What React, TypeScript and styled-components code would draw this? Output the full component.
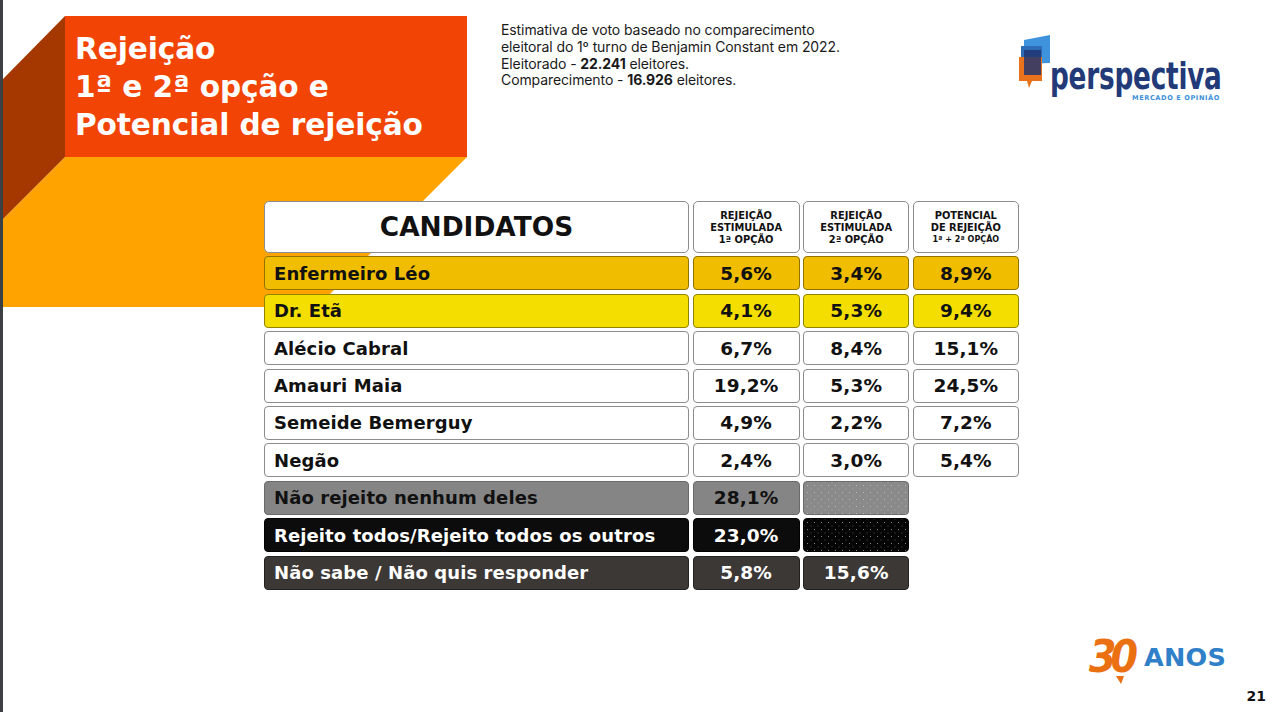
import styled, { createGlobalStyle, css } from 'styled-components';

const GlobalStyle = createGlobalStyle`
  html, body {
    margin: 0;
    padding: 0;
    background: #ffffff;
  }
  body {
    font-family: 'DejaVu Sans', 'Liberation Sans', sans-serif;
  }
`;

const Page = styled.div`
  position: relative;
  width: 1277px;
  height: 712px;
  box-sizing: border-box;
  border-left: 3px solid #3c3f43;
  overflow: hidden;
  background: #fff;
  display: flex;
  flex-direction: column;
`;

const Decor = styled.svg`
  position: absolute;
  left: 0;
  top: 0;
  z-index: 0;
`;

const TopRow = styled.div`
  position: relative;
  z-index: 1;
  height: 201px;
  display: flex;
  align-items: flex-start;
`;

const TitleBox = styled.h1`
  margin: 16px 0 0 62px;
  width: 402px;
  height: 141px;
  box-sizing: border-box;
  padding: 14px 0 0 10px;
  background: #f24505;
  color: #fff;
  font-family: 'DejaVu Sans', sans-serif;
  font-weight: 700;
  font-size: 29.6px;
  line-height: 38px;
  letter-spacing: -0.1px;
`;

const Info = styled.p`
  margin: 22px 0 0 34px;
  font-family: Inter, 'Open Sans', sans-serif;
  font-size: 14px;
  line-height: 16.8px;
  color: #1a1a1a;
  letter-spacing: -0.1px;
  b {
    font-weight: 700;
  }
`;

const Logo = styled.div`
  margin: 34px 51px 0 auto;
  width: 210px;
  display: flex;
  align-items: flex-start;
`;

const Wordmark = styled.div`
  margin-top: 27px;
  margin-left: -2px;
  width: 176px;
  display: flex;
  flex-direction: column;
`;

const Brand = styled.span`
  display: inline-block;
  white-space: nowrap;
  font-family: 'DejaVu Sans Condensed', 'DejaVu Sans', sans-serif;
  font-weight: 700;
  font-size: 38px;
  line-height: 30px;
  color: #233a78;
  transform: scaleX(0.77);
  transform-origin: left center;
  letter-spacing: -0.3px;
`;

const Tagline = styled.span`
  align-self: flex-end;
  margin: 4px 6px 0 0;
  font-family: 'DejaVu Sans', sans-serif;
  font-weight: 700;
  font-size: 6.6px;
  line-height: 7px;
  letter-spacing: 0.6px;
  color: #3b8fd8;
  white-space: nowrap;
`;

const Table = styled.div`
  position: relative;
  z-index: 1;
  margin-left: 261px;
  display: grid;
  grid-template-columns: 425px 107px 106px 106px;
  grid-template-rows: 52px repeat(9, 34px);
  column-gap: 3.6px;
  row-gap: 3.4px;
  font-family: 'DejaVu Sans', sans-serif;
  font-weight: 700;
`;

type Tone = 'white' | 'gold' | 'yellow' | 'gray' | 'black' | 'dark';

const tones: Record<Tone, { bg: string; border: string; fg: string }> = {
  white: { bg: '#ffffff', border: '#8c8c8c', fg: '#111111' },
  gold: { bg: '#f0bd00', border: '#8f7200', fg: '#111111' },
  yellow: { bg: '#f4de00', border: '#8f8300', fg: '#111111' },
  gray: { bg: '#858585', border: '#6a6a6a', fg: '#111111' },
  black: { bg: '#0c0c0c', border: '#000000', fg: '#ffffff' },
  dark: { bg: '#3c3836', border: '#242220', fg: '#ffffff' },
};

const dots = {
  gray: css`
    background-color: #8a8a8a;
    background-image: radial-gradient(rgba(255, 255, 255, 0.4) 0.6px, transparent 1px),
      radial-gradient(rgba(255, 255, 255, 0.25) 0.6px, transparent 1px);
    background-size: 7px 7px;
    background-position: 0 0, 3.5px 3.5px;
  `,
  black: css`
    background-color: #050505;
    background-image: radial-gradient(rgba(255, 255, 255, 0.5) 0.6px, transparent 1px),
      radial-gradient(rgba(255, 255, 255, 0.3) 0.6px, transparent 1px);
    background-size: 7px 7px;
    background-position: 0 0, 3.5px 3.5px;
  `,
};

const Cell = styled.div<{ $tone: Tone; $name?: boolean; $dots?: 'gray' | 'black' }>`
  box-sizing: border-box;
  border-radius: 4px;
  border: 1.3px solid ${(p) => tones[p.$tone].border};
  background: ${(p) => tones[p.$tone].bg};
  color: ${(p) => tones[p.$tone].fg};
  display: flex;
  align-items: center;
  justify-content: ${(p) => (p.$name ? 'flex-start' : 'center')};
  padding-left: ${(p) => (p.$name ? '9px' : '0')};
  font-size: ${(p) => (p.$name ? '18px' : '18.5px')};
  letter-spacing: 0.1px;
  white-space: nowrap;
  ${(p) => p.$dots && dots[p.$dots]}
`;

const HeadCell = styled.div<{ $big?: boolean }>`
  box-sizing: border-box;
  border-radius: 5px;
  border: 1.3px solid #8c8c8c;
  background: #fff;
  color: #111;
  display: flex;
  flex-direction: column;
  align-items: center;
  justify-content: center;
  text-align: center;
  font-size: ${(p) => (p.$big ? '26.4px' : '9.9px')};
  line-height: ${(p) => (p.$big ? '30px' : '12.3px')};
  padding-top: ${(p) => (p.$big ? '0' : '2px')};
`;

const Small = styled.span`
  font-size: 8px;
`;

const Blank = styled.div``;

const Footer = styled.div`
  position: relative;
  z-index: 1;
  margin-top: 46px;
  display: flex;
  flex-direction: column;
  align-items: flex-end;
`;

const Anniversary = styled.div`
  margin-right: 51px;
  display: flex;
  align-items: center;
  height: 42px;
`;

const Thirty = styled.span`
  position: relative;
  font-family: 'DejaVu Sans Condensed', 'DejaVu Sans', sans-serif;
  font-weight: 700;
  font-style: italic;
  font-size: 44px;
  line-height: 40px;
  letter-spacing: -6px;
  color: #ea7012;
  margin-right: 12px;
  &::after {
    content: '';
    position: absolute;
    left: 27px;
    bottom: -7px;
    border-style: solid;
    border-width: 8px 3px 0 5px;
    border-color: #ea7012 transparent transparent transparent;
  }
`;

const Anos = styled.span`
  font-family: 'DejaVu Sans', sans-serif;
  font-weight: 700;
  font-size: 25.5px;
  line-height: 28px;
  letter-spacing: 0.2px;
  color: #2f80c8;
`;

const PageNum = styled.span`
  margin: 10px 11px 0 0;
  font-family: 'DejaVu Sans', sans-serif;
  font-weight: 700;
  font-size: 14px;
  line-height: 16px;
  color: #111;
`;

type Row = {
  name: string;
  tone: Tone;
  values: (string | null)[];
  dots?: 'gray' | 'black';
};

const rows: Row[] = [
  { name: 'Enfermeiro Léo', tone: 'gold', values: ['5,6%', '3,4%', '8,9%'] },
  { name: 'Dr. Etã', tone: 'yellow', values: ['4,1%', '5,3%', '9,4%'] },
  { name: 'Alécio Cabral', tone: 'white', values: ['6,7%', '8,4%', '15,1%'] },
  { name: 'Amauri Maia', tone: 'white', values: ['19,2%', '5,3%', '24,5%'] },
  { name: 'Semeide Bemerguy', tone: 'white', values: ['4,9%', '2,2%', '7,2%'] },
  { name: 'Negão', tone: 'white', values: ['2,4%', '3,0%', '5,4%'] },
  { name: 'Não rejeito nenhum deles', tone: 'gray', values: ['28,1%', '', null], dots: 'gray' },
  { name: 'Rejeito todos/Rejeito todos os outros', tone: 'black', values: ['23,0%', '', null], dots: 'black' },
  { name: 'Não sabe / Não quis responder', tone: 'dark', values: ['5,8%', '15,6%', null] },
];

function PerspectivaIcon() {
  return (
    <svg width="36" height="56" viewBox="0 0 36 56">
      <polygon points="8,6 34,1 34,29 8,30" fill="#3f93dc" />
      <polygon points="5,12 26,12 26,38 5,38" fill="#2c6cb6" />
      <path d="M3 23 H26 V47 H16 L13 54 L11 47 H3 Z" fill="#e8731c" />
      <polygon points="8,16 25,16 25,41 8,41" fill="#1f3370" opacity="0.82" />
    </svg>
  );
}

export default function App() {
  return (
    <>
      <GlobalStyle />
      <Page>
        <Decor width="470" height="310" viewBox="0 0 470 310">
          <polygon points="62,157 464,157 314,307 0,307 0,219" fill="#ffa300" />
          <polygon points="0,79 62,16 62,157 0,219" fill="#a43800" />
        </Decor>

        <TopRow>
          <TitleBox>
            Rejeição
            <br />
            1ª e 2ª opção e
            <br />
            Potencial de rejeição
          </TitleBox>
          <Info>
            Estimativa de voto baseado no comparecimento
            <br />
            eleitoral do 1º turno de Benjamin Constant em 2022.
            <br />
            Eleitorado - <b>22.241</b> eleitores.
            <br />
            Comparecimento - <b>16.926</b> eleitores.
          </Info>
          <Logo>
            <PerspectivaIcon />
            <Wordmark>
              <Brand>perspectiva</Brand>
              <Tagline>MERCADO E OPINIÃO</Tagline>
            </Wordmark>
          </Logo>
        </TopRow>

        <Table>
          <HeadCell $big>CANDIDATOS</HeadCell>
          <HeadCell>
            REJEIÇÃO
            <br />
            ESTIMULADA
            <br />
            1ª OPÇÃO
          </HeadCell>
          <HeadCell>
            REJEIÇÃO
            <br />
            ESTIMULADA
            <br />
            2ª OPÇÃO
          </HeadCell>
          <HeadCell>
            POTENCIAL
            <br />
            DE REJEIÇÃO
            <br />
            <Small>1ª + 2ª OPÇÃO</Small>
          </HeadCell>

          {rows.map((r) => (
            <>
              <Cell key={r.name} $tone={r.tone} $name>
                {r.name}
              </Cell>
              {r.values.map((v, i) =>
                v === null ? (
                  <Blank key={r.name + i} />
                ) : v === '' ? (
                  <Cell key={r.name + i} $tone={r.tone} $dots={r.dots} />
                ) : (
                  <Cell key={r.name + i} $tone={r.tone}>
                    {v}
                  </Cell>
                )
              )}
            </>
          ))}
        </Table>

        <Footer>
          <Anniversary>
            <Thirty>30</Thirty>
            <Anos>ANOS</Anos>
          </Anniversary>
          <PageNum>21</PageNum>
        </Footer>
      </Page>
    </>
  );
}
